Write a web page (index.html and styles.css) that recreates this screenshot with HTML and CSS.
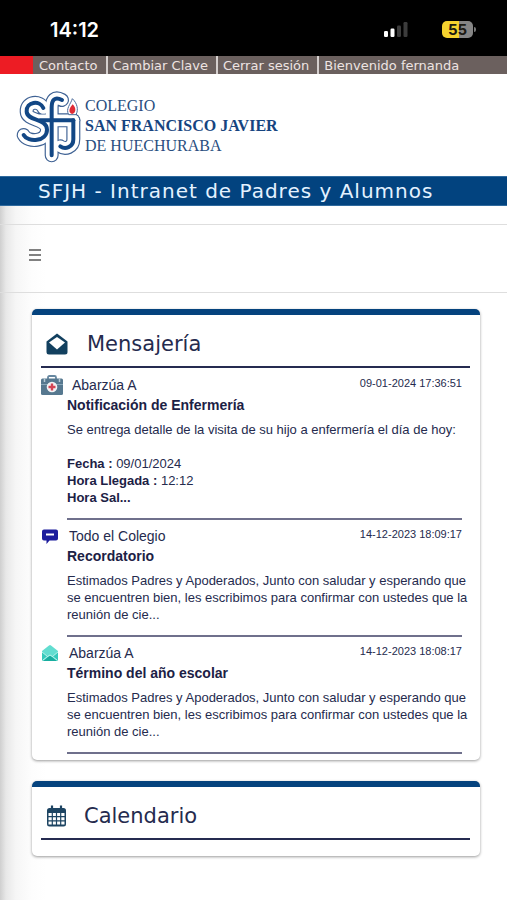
FILE: index.html
```html
<!DOCTYPE html>
<html lang="es">
<head>
<meta charset="utf-8">
<meta name="viewport" content="width=device-width, initial-scale=1">
<title>SFJH - Intranet de Padres y Alumnos</title>
<link rel="stylesheet" href="styles.css">
</head>
<body>
<div class="status">
  <span class="clock">14:12</span>
  <div class="indicators">
    <svg class="signal" viewBox="0 0 24 16" aria-hidden="true">
      <rect x="0" y="9" width="4" height="6" rx="1.2" fill="#fff"/>
      <rect x="6.500" y="6.500" width="4" height="8.500" rx="1.200" fill="#fff"/>
      <rect x="13" y="3.500" width="4" height="11.500" rx="1.200" fill="#3c3c3c"/>
      <rect x="19.500" y="0" width="4" height="15" rx="1.200" fill="#3c3c3c"/>
    </svg>
    <div class="battery"><span class="level">55</span><span class="tip"></span></div>
  </div>
</div>

<nav class="topnav">
  <a href="#contacto">Contacto</a>
  <a href="#clave">Cambiar Clave</a>
  <a href="#salir">Cerrar sesión</a>
  <span>Bienvenido fernanda</span>
</nav>

<header class="brand">
  <svg class="crest" viewBox="0 0 210 240" aria-hidden="true">
    <defs>
      <g id="monogram">
        <path d="M88 66 C78 42 36 46 38 77 C39 106 99 96 99 131 C99 167 42 171 29 147"/>
        <path d="M144 42 C122 30 113 42 113 64 V208"/>
        <path d="M78 103 H178"/>
        <path d="M178 103 V160 C178 185 153 191 139 181"/>
      </g>
    </defs>
    <use href="#monogram" class="rim"/>
    <use href="#monogram" class="gap"/>
    <use href="#monogram" class="core"/>
    <path d="M175 38 C190 52 194 71 186 86 H164 C154 68 170 55 175 38 Z" fill="#fff" stroke="#4d6c9b" stroke-width="3"/>
    <path d="M176 55 C188 66 186 82 174 84 C161 80 166 66 176 55 Z" fill="#e02b35"/>
  </svg>
  <p class="school">COLEGIO<br><strong>SAN FRANCISCO JAVIER</strong><br>DE HUECHURABA</p>
</header>

<h1 class="banner">SFJH - Intranet de Padres y Alumnos</h1>

<main class="page">
  <div class="toolbar">
    <button class="menu" type="button" aria-label="Menú">
      <svg viewBox="0 0 12 12" aria-hidden="true"><path d="M0 1H12M0 6H12M0 11H12" stroke="#808080" stroke-width="2"/></svg>
    </button>
  </div>

  <div class="cards">
    <section class="card">
      <h2 class="heading">
        <svg viewBox="0 0 22 22" aria-hidden="true"><path d="M0.500 8.500 L11 0.500 L21.500 8.500 V19 Q21.500 21.500 19 21.500 H3 Q0.500 21.500 0.500 19 Z" fill="#12405f"/><path d="M11 4 L19 9.500 L11 16.500 L3 9.500 Z" fill="#fff"/></svg>
        <span>Mensajería</span>
      </h2>
      <article class="message">
        <div class="meta">
          <svg class="kit" viewBox="0 0 22 20" aria-hidden="true"><path d="M7 4 V2.500 Q7 1 8.500 1 H13.500 Q15 1 15 2.500 V4" fill="none" stroke="#6687a0" stroke-width="1.800"/><rect y="3.500" width="22" height="16.500" rx="1.500" fill="#56788f"/><path d="M0 9.500H22" stroke="#88a7b9"/><path d="M3.500 3.500V7M18.500 3.500V7" stroke="#b7cad5" stroke-width="1.500"/><circle cx="11" cy="12" r="5.300" fill="#f3f3f5"/><path d="M11 8.500V15.500M7.500 12H14.500" stroke="#d44554" stroke-width="2.400"/></svg>
          <span class="sender">Abarzúa A</span>
          <time>09-01-2024 17:36:51</time>
        </div>
        <div class="content">
          <h3>Notificación de Enfermería</h3>
          <p>Se entrega detalle de la visita de su hijo a enfermería el día de hoy:<br><br><b>Fecha :</b> 09/01/2024<br><b>Hora Llegada :</b> 12:12<br><b>Hora Sal...</b></p>
        </div>
      </article>
      <article class="message">
        <div class="meta">
          <svg class="chat" viewBox="0 0 16 16" aria-hidden="true"><path d="M2 1.500H14Q16 1.500 16 3.500V10.500Q16 12.500 14 12.500H7.500L4.500 16V12.500H2Q0 12.500 0 10.500V3.500Q0 1.500 2 1.500Z" fill="#1b1b9c"/><path d="M4 6.500H12" stroke="#fff" stroke-width="2"/></svg>
          <span class="sender">Todo el Colegio</span>
          <time>14-12-2023 18:09:17</time>
        </div>
        <div class="content">
          <h3>Recordatorio</h3>
          <p>Estimados Padres y Apoderados, Junto con saludar y esperando que<br>se encuentren bien, les escribimos para confirmar con ustedes que la<br>reunión de cie...</p>
        </div>
      </article>
      <article class="message">
        <div class="meta">
          <svg class="chat" viewBox="0 0 16 16" aria-hidden="true"><path d="M0 6 L7 0.500 Q8 -0.300 9 0.500 L16 6 V14.500Q16 16 14.500 16H1.500Q0 16 0 14.500Z" fill="#62ddd0"/><path d="M0 7 L5.500 11.500 L0 15.500ZM16 7 L10.500 11.500 L16 15.500Z" fill="#35c9bb"/><path d="M1 16 L8 10.500 L15 16Z" fill="#18ad9f"/><path d="M0 7 L5.500 11.500 L1 15M16 7 L10.500 11.500 L15 15M5.500 11.500L8 10L10.500 11.500" fill="none" stroke="#cff7f2" stroke-width=".8"/></svg>
          <span class="sender">Abarzúa A</span>
          <time>14-12-2023 18:08:17</time>
        </div>
        <div class="content">
          <h3>Término del año escolar</h3>
          <p>Estimados Padres y Apoderados, Junto con saludar y esperando que<br>se encuentren bien, les escribimos para confirmar con ustedes que la<br>reunión de cie...</p>
        </div>
      </article>
    </section>

    <section class="card calendar">
      <h2 class="heading">
        <svg viewBox="0 0 22 22" aria-hidden="true"><rect x="1" y="3" width="19" height="18.500" rx="2.500" fill="#1d4462"/><path d="M6 0.500V5M15 0.500V5" stroke="#1d4462" stroke-width="2.200"/><path d="M2.500 8h3.200v3h-3.200zM6.900 8h3v3h-3zM11.100 8h3v3h-3zM15.300 8h3.200v3h-3.200zM2.500 12.300h3.200v3h-3.200zM6.900 12.300h3v3h-3zM11.100 12.300h3v3h-3zM15.300 12.300h3.200v3h-3.200zM2.500 16.600h3.200v3h-3.200zM6.900 16.600h3v3h-3zM11.100 16.600h3v3h-3zM15.300 16.600h3.200v3h-3.200z" fill="#fff"/></svg>
        <span>Calendario</span>
      </h2>
    </section>
  </div>
</main>
</body>
</html>
```
FILE: styles.css
```css
* { box-sizing: border-box; }

body {
  margin: 0;
  min-height: 100vh;
  display: flex;
  flex-direction: column;
  background: #fff;
  color: #252b4e;
  font-family: "Liberation Sans", Arial, sans-serif;
}

h1, h2, h3, p { margin: 0; font-weight: normal; }

/* Phone status bar */
.status {
  display: flex;
  justify-content: space-between;
  align-items: center;
  height: 56px;
  padding: 3px 34px 0 50px;
  background: #000;
  color: #fff;
}
.clock { font: 600 20px/24px Inter, sans-serif; }
.indicators { display: flex; align-items: center; gap: 34px; }
.signal { width: 24px; height: 16px; }
.battery {
  position: relative;
  width: 31px;
  border-radius: 5px;
  background: linear-gradient(90deg, #f5d22e 55%, #858585 55%);
  color: #1c1a12;
  text-align: center;
}
.level { display: block; font: 700 15px/17px Inter, sans-serif; }
.tip {
  position: absolute;
  top: 6px;
  right: -3px;
  width: 2px;
  height: 5px;
  border-radius: 0 2px 2px 0;
  background: #777;
}

/* Top navigation */
.topnav {
  display: flex;
  height: 18px;
  border-left: 33px solid #ed1c24;
  background: #6b605e;
  font: 13px/19px "DejaVu Sans", Verdana, sans-serif;
  white-space: nowrap;
}
.topnav > * { padding: 0 8px 0 5px; color: #eee4e2; text-decoration: none; }
.topnav > * + * { border-left: 2px solid #d5cfce; }
.topnav > :first-child { padding-left: 6px; }

/* School identity */
.brand {
  display: flex;
  align-items: flex-start;
  height: 102px;
  padding: 12px 14px 0;
}
.crest { width: 70px; height: 80px; }
.crest use { fill: none; stroke-linecap: round; stroke-linejoin: round; }
.rim { stroke: #3f6294; stroke-width: 42px; }
.gap { stroke: #fff; stroke-width: 35px; }
.core { stroke: #124785; stroke-width: 12px; }
.school {
  padding: 10px 0 0 1px;
  color: #294e80;
  font: 16px/20px "Liberation Serif", serif;
}
.school strong { color: #164480; }

.banner {
  padding: 0 38px;
  border: solid #2f6a9e;
  border-width: 1px 0;
  background: #02437f;
  color: #e4f2ff;
  font: 20px/28px "DejaVu Sans", Verdana, sans-serif;
  letter-spacing: 1px;
}

/* Page body, with the shade of the off-canvas drawer on its left */
.page {
  flex: 1;
  padding-top: 18px;
  background: linear-gradient(90deg, #cfcfcf, #e8e8e8 6px, #f6f6f6 16px, #fdfdfd 32px, #fff 46px);
}
.toolbar {
  display: flex;
  align-items: center;
  height: 69px;
  padding: 0 29px 8px;
  border: solid #dedede;
  border-width: 1px 0;
}
.menu { display: flex; padding: 0; border: 0; background: none; }
.menu svg { width: 12px; height: 12px; }

.cards {
  display: flex;
  flex-direction: column;
  gap: 21px;
  padding: 16px 27px 44px 32px;
}
.card {
  padding: 0 10px 6px 9px;
  border-top: 6px solid #05437e;
  border-radius: 5px;
  background: #fff;
  box-shadow: 0 1px 3px #00000066;
}
.calendar { padding-bottom: 16px; }
.heading {
  display: flex;
  align-items: center;
  gap: 19px;
  height: 53px;
  padding: 6px 5px 0;
  border-bottom: 2px solid #252b50;
  font: 21px/30px "DejaVu Sans", Verdana, sans-serif;
}
.heading svg { width: 22px; height: 22px; }
.calendar .heading { gap: 16px; }

.message { padding: 6px 8px 0 0; }
.heading + .message { padding-top: 7px; }
.meta { display: flex; align-items: center; gap: 11px; height: 20px; }
.kit { width: 22px; height: 20px; }
.kit + .sender { margin-left: -2px; }
.chat { width: 16px; height: 16px; margin-left: 1px; }
.sender { flex: 1; font-size: 14px; }
time { font-size: 11px; line-height: 13px; padding-bottom: 4px; }
.content {
  margin-left: 26px;
  padding-bottom: 12px;
  border-bottom: 2px solid #6f708c;
}
.content h3 { font-size: 14px; line-height: 20px; font-weight: bold; color: #1c2145; }
.content p { margin-top: 6px; font-size: 13px; line-height: 17px; white-space: nowrap; }
.content b { color: #1c2145; }
```
